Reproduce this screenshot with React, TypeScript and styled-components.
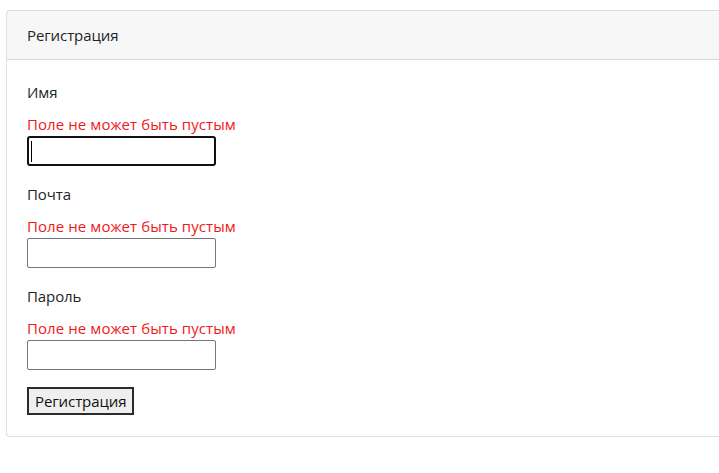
import React from "react";
import styled, { createGlobalStyle } from "styled-components";

const Global = createGlobalStyle`
  html, body { margin: 0; padding: 0; background: #fff; overflow: hidden; }
  body {
    font-family: "Open Sans", "Noto Sans", "Liberation Sans", sans-serif;
    font-size: 16px;
    line-height: 1.5;
    color: #212529;
  }
  * { box-sizing: border-box; }
`;

const Page = styled.div`
  padding: 10px 0 0 6px;
  width: 719px;
  overflow: hidden;
`;

const Card = styled.div`
  width: 740px;
  border: 1px solid rgba(0, 0, 0, 0.125);
  border-radius: 4px;
  background: #fff;
  display: flex;
  flex-direction: column;
`;

const CardHeader = styled.div`
  padding: 12px 20px;
  background: rgba(0, 0, 0, 0.03);
  border-bottom: 1px solid rgba(0, 0, 0, 0.125);
  font-size: 15px;
  line-height: 24px;
  letter-spacing: -0.1px;
`;

const CardBody = styled.form`
  padding: 20px 20px 21px;
  display: flex;
  flex-direction: column;
  align-items: flex-start;
`;

const Group = styled.div`
  display: flex;
  flex-direction: column;
  align-items: flex-start;
  margin-bottom: 16px;
`;

const Label = styled.label`
  font-size: 15px;
  line-height: 24px;
  letter-spacing: -0.1px;
  margin-bottom: 8px;
`;

const ErrorText = styled.div`
  color: #f01818;
  font-size: 15px;
  line-height: 24px;
  letter-spacing: 0.08px;
`;

const InputWrap = styled.div`
  position: relative;
`;

const Input = styled.input<{ $focused?: boolean }>`
  width: 189px;
  height: 30px;
  margin: 0;
  padding: 1px 2px;
  font: inherit;
  background: #fff;
  outline: none;
  border: ${(p) => (p.$focused ? "2px solid #111" : "1px solid #767676")};
  border-radius: ${(p) => (p.$focused ? "3px" : "2px")};
`;

const Caret = styled.span`
  position: absolute;
  left: 4px;
  top: 5px;
  width: 1px;
  height: 21px;
  background: #000;
`;

const Button = styled.button`
  margin: 1px 0 0;
  padding: 0 6px;
  height: 28px;
  font-family: inherit;
  font-size: 15px;
  letter-spacing: -0.1px;
  color: #111;
  background: #efefef;
  border: 2px solid #2b2b2b;
  border-radius: 0;
`;

const fields = ["Имя", "Почта", "Пароль"];

export default function App() {
  return (
    <>
      <Global />
      <Page>
        <Card>
          <CardHeader>Регистрация</CardHeader>
          <CardBody onSubmit={(e) => e.preventDefault()}>
            {fields.map((f, i) => (
              <Group key={f}>
                <Label>{f}</Label>
                <ErrorText>Поле не может быть пустым</ErrorText>
                <InputWrap>
                  <Input $focused={i === 0} type={i === 2 ? "password" : "text"} />
                  {i === 0 && <Caret />}
                </InputWrap>
              </Group>
            ))}
            <Button type="submit">Регистрация</Button>
          </CardBody>
        </Card>
      </Page>
    </>
  );
}
